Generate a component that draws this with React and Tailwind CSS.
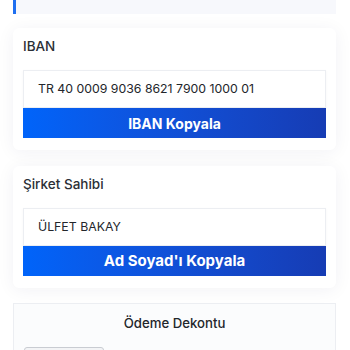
import React from 'react';

const Field = ({ label, value, action, big }) => (
  <div className="bg-white rounded-md px-[10px] pt-[8px] pb-[12px] shadow-[0_2px_18px_rgba(30,40,80,0.06)]">
    <div className="text-[13.5px] leading-[20px] font-medium text-[#2b2f36] mb-[14px]">{label}</div>
    <div className="h-[38px] flex items-center px-[14px] bg-white border border-[#eceef2] shadow-[0_1px_3px_rgba(0,0,0,0.04)] text-[12.3px] text-[#23262b]">
      {value}
    </div>
    <button
      className={`w-full h-[30px] flex items-center justify-center bg-linear-to-r from-[#0064fa] to-[#163cb4] text-white font-bold ${big ? 'text-[15px]' : 'text-[14px]'}`}
    >
      {action}
    </button>
  </div>
);

export default function App() {
  return (
    <div className="h-[350px] overflow-hidden bg-white pl-[13px] pr-[14px] font-['Inter',sans-serif]">
      {/* previous card tail */}
      <div className="h-[14px] border-l-[3px] border-[#1f6ff0] bg-[#f7f8fc]" />

      <div className="mt-[14px]">
        <Field label="IBAN" value="TR 40 0009 9036 8621 7900 1000 01" action="IBAN Kopyala" />
      </div>

      <div className="mt-[16px]">
        <Field label="Şirket Sahibi" value="ÜLFET BAKAY" action="Ad Soyad'ı Kopyala" big />
      </div>

      <div className="mt-[15px] border border-[#eceef2] bg-[#fbfcfd] px-[10px] pt-[9px] pb-[20px]">
        <div className="text-center text-[13.2px] leading-[20px] font-medium text-[#23262b]">Ödeme Dekontu</div>
        <div className="mt-[14px] w-[80px] h-[28px] border border-[#c9ccd2] rounded-[3px] bg-[#f3f4f6]" />
      </div>
    </div>
  );
}
